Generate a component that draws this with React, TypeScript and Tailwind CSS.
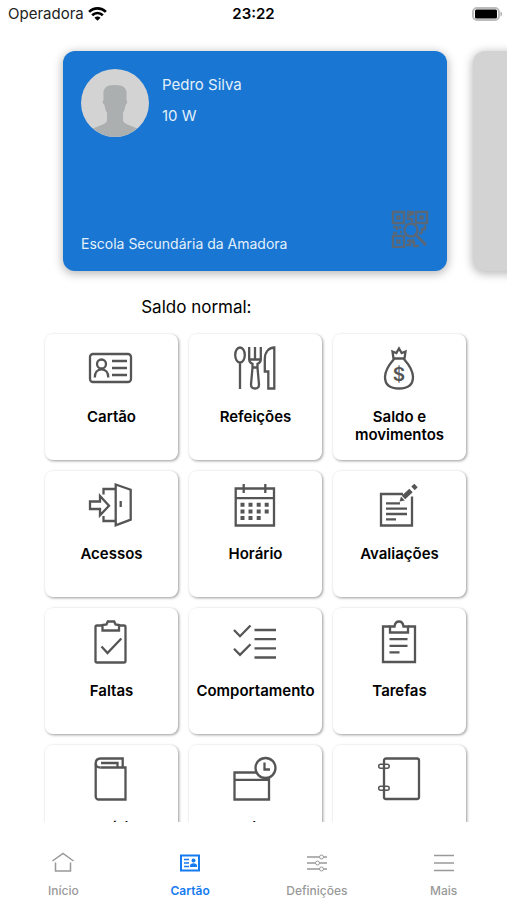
import type { ReactNode } from "react";

function TileIcon({ children }: { children: ReactNode }) {
  return (
    <svg
      viewBox="1 0 46 44"
      width="46"
      height="44"
      fill="none"
      stroke="currentColor"
      strokeWidth="2.3"
      aria-hidden="true"
      className="shrink-0 overflow-visible text-[#555555]"
    >
      {children}
    </svg>
  );
}

const tiles: { label: string; icon: ReactNode }[] = [
  {
    label: "Cartão",
    icon: (
      <>
        <rect x="2" y="8" width="41" height="28" rx="3" />
        <circle cx="13.500" cy="18" r="4.500" />
        <path d="M6.800 31.500c0-5 2.600-8.200 6.700-8.200s6.800 3.200 6.800 8.200M24 15h15M24 22h15M24 29h15" />
      </>
    ),
  },
  {
    label: "Refeições",
    icon: (
      <>
        <ellipse cx="8" cy="9" rx="4.800" ry="7.500" />
        <path d="M8 16.500V43" />
        <path d="M17.200 1v12.500c0 2.500 1 3.500 3.300 4.300v4L19 38.500c0 2.500 1.300 4 4 4s4-1.500 4-4l-1.500-16.700v-4c2.300-.8 3.300-1.800 3.300-4.300V1M23 1v13M17.500 13.500h11.300M20 21.500h6" />
        <path d="M42.300 1.500v41h-6V25.500h-3.500V13c0-7 4-11.500 9.500-11.500z" />
      </>
    ),
  },
  {
    label: "Saldo e movimentos",
    icon: (
      <>
        <path d="M17.500 12.500L16.500 5.500l3.800 1.500L23 2.500 25.700 7l3.800-1.500-1 7zM18 13C14.500 17 9 23 9 31c0 7.500 5 11.500 14 11.500S37 38.500 37 31c0-8-5.500-14-9-18" />
        <text
          x="23"
          y="35"
          textAnchor="middle"
          fontSize="19"
          fontWeight="600"
          fill="currentColor"
          stroke="none"
        >
          $
        </text>
      </>
    ),
  },
  {
    label: "Acessos",
    icon: (
      <>
        <path d="M2 18.500h10v-5.500l9 9.700-9 9.700V26H2z" />
        <path d="M15.500 11.500V6H27.500M15.500 33v5H27.500M27.700 1.500l15 5.200v30l-15 5.600zM32.700 18v6" />
      </>
    ),
  },
  {
    label: "Horário",
    icon: (
      <>
        <path d="M3.700 5.500H42v37H3.700zM3.700 15.200H42M11.700 1v9M33.300 1v9" />
        <path
          strokeWidth="4"
          d="M8.500 21.700h4M16.500 21.700h4M24.700 21.700h4M32.700 21.700h4M8.500 28.400h4M16.500 28.400h4M24.700 28.400h4M32.700 28.400h4M8.500 35h4M16.500 35h4M24.700 35h4"
        />
      </>
    ),
  },
  {
    label: "Avaliações",
    icon: (
      <>
        <path d="M27 11H5v31.500h31V13.500M10 20.300h14M10 25.600h21M10 31h21M10 36.300h10" />
        <path strokeWidth="5" d="M27.500 14.500l7.500-7M37 5.300l3-2.800" />
        <path fill="currentColor" stroke="none" d="M23.500 18.500l1.500-5 3.800 4z" />
      </>
    ),
  },
  {
    label: "Faltas",
    icon: (
      <>
        <path d="M14.500 5.500H9a1.500 1.500 0 0 0-1.500 1.500v34A1.500 1.500 0 0 0 9 42.500h27a1.500 1.500 0 0 0 1.500-1.500V7A1.500 1.500 0 0 0 36 5.500h-5.500" />
        <path d="M14.500 10.500V5l4-.5 1.300-3h6.400l1.300 3 3.500.5v5.500zM13.500 26.500l6 6.500L33.300 18.500" />
      </>
    ),
  },
  {
    label: "Comportamento",
    icon: (
      <path d="M2 10l6 6.200L18.500 5.500M2 28.700l6 6.200 10.500-10.700M22.500 10H44M22.500 19.200H44M22.500 28.400H44M22.500 37.500H44" />
    ),
  },
  {
    label: "Tarefas",
    icon: (
      <>
        <path d="M14 6.500H7v35.500h32V6.500h-7" />
        <path d="M14 12.500v-6h4.500C19 3 20.500 1.500 23 1.500S27 3 27.500 6.500H32v6zM13.500 19.200h18M13.500 25.800h18M13.500 32.400h10" />
      </>
    ),
  },
  {
    label: "Sumários",
    icon: (
      <>
        <path d="M34.700 10.500V1.500H12.500C9.500 1.500 7.700 3.500 7.700 6.500V39.500a3 3 0 0 0 3 3H37.500V10.500H12.500" />
        <path d="M12.500 10.500C9.500 10.500 7.700 9 7.700 6.500M29.500 10.500V6H13" />
      </>
    ),
  },
  {
    label: "Atendimento",
    icon: (
      <>
        <path d="M24.500 15.500H2.500v27h34.500V20.500M2.500 22.800h34.500" />
        <circle cx="33.500" cy="11" r="10" />
        <path d="M32.500 5.500v7H38" />
      </>
    ),
  },
  {
    label: "Agenda",
    icon: (
      <>
        <rect x="8" y="1.500" width="35" height="40.500" rx="2" />
        <g strokeWidth="1.500">
          <rect x="2.700" y="7.300" width="10.500" height="4" rx="2" />
          <rect x="2.700" y="29.300" width="10.500" height="4" rx="2" />
        </g>
      </>
    ),
  },
];

function StatusBar() {
  return (
    <header className="grid h-7 shrink-0 grid-cols-3 items-center px-2 text-[15px] text-[#222222]">
      <div className="flex items-center gap-1">
        <span>Operadora</span>
        <svg viewBox="0 0 20 15" width="19" height="14" fill="none" stroke="#000" strokeWidth="2.800" aria-hidden="true">
          <path d="M1 5.200c5-5 13-5 18 0M4.300 8.800c3.200-3.200 8.200-3.200 11.400 0" />
          <path d="M10 14.800l-3.300-3.300c1.900-1.700 4.700-1.700 6.600 0z" fill="#000" stroke="none" />
        </svg>
      </div>
      <time className="text-center font-semibold text-black">23:22</time>
      <svg viewBox="0 0 31 14" width="31" height="14" className="-mr-1 justify-self-end" aria-hidden="true">
        <rect x="1" y="1" width="26" height="12" rx="4" fill="#fff" stroke="#bcbcbc" strokeWidth="2" />
        <rect x="3" y="2.500" width="22" height="9" rx="1.500" fill="#000" />
        <path d="M28.500 4.500c2 .8 2 4.200 0 5z" fill="#aaa" />
      </svg>
    </header>
  );
}

function StudentCard() {
  return (
    <article className="flex h-[220px] w-96 shrink-0 flex-col justify-between rounded-xl bg-[#1976d2] px-[18px] pt-[18px] pb-[15px] text-[15px] leading-6 text-[#e3f0fb] shadow-[0_2px_10px_1px_rgba(0,0,0,0.28)]">
      <div className="flex gap-[13px]">
        <svg viewBox="0 0 68 68" width="68" height="68" className="rounded-full bg-[#d3d3d3]" aria-hidden="true">
          <path
            fill="#abafaf"
            d="M22.500 27c-1-8 3-11 11.500-11s12.500 3 11.500 11v4c1.300 1 .8 4-1 5-.5 4-1.500 6-2.500 8v7c0 4 7 5 14 8.500C50 65 42 68 34 68s-16-3-22-8.500C20 56 26 55 26 51v-7c-1-2-2-4-2.500-8-1.800-1-2.300-4-1-5z"
          />
        </svg>
        <div className="pt-1">
          <p>Pedro Silva</p>
          <p className="mt-[7px]">10 W</p>
        </div>
      </div>
      <div className="flex items-end justify-between">
        <p className="text-[14px]">Escola Secundária da Amadora</p>
        <button type="button" aria-label="Código QR" className="mb-2 text-[#596776]">
          <svg viewBox="0 0 38 38" width="38" height="38" fill="none" stroke="currentColor" strokeWidth="2.400" aria-hidden="true">
            <path d="M2 2h11v11H2zM25 2h11v11H25zM2 26h11v11H2z" />
            <path d="M6.500 6.500h2v2h-2zM29.500 6.500h2v2h-2zM6.500 30.500h2v2h-2z" />
            <circle cx="20" cy="20" r="6.500" />
            <path strokeWidth="3" d="M25 25l10 10" />
            <path d="M16 2h4v3h-3v4h4v3M22 1v4M2 17h4v3M9 16v3M2 23h4M9 22h2M31 23v-4h3v-4M28 23h3M16 31h3v-2M15 35h4v-3h4v4h5M22 31v-2" />
          </svg>
        </button>
      </div>
    </article>
  );
}

const tabs: { label: string; icon: ReactNode }[] = [
  {
    label: "Início",
    icon: <path d="M1.500 10L12 2.500 22.500 10M4.500 11.500v8.500h15v-8.500" />,
  },
  {
    label: "Cartão",
    icon: (
      <>
        <path strokeWidth="2" d="M3 4.500h18v15H3z" />
        <path d="M6 8.500h5M6 12h5M6 15.500h5" />
        <circle cx="15.500" cy="9.500" r="2" fill="currentColor" stroke="none" />
        <path d="M12 16v-1c0-1.800 1.400-2.700 3.500-2.700s3.500.9 3.500 2.700v1z" fill="currentColor" stroke="none" />
      </>
    ),
  },
  {
    label: "Definições",
    icon: (
      <>
        <path d="M2 6h12.500M18.500 6H22M2 12h8.500M14.500 12H22M2 18h12.500M18.500 18H22" />
        <g strokeWidth="1">
          <circle cx="16.500" cy="6" r="2" />
          <circle cx="12.500" cy="12" r="2" />
          <circle cx="16.500" cy="18" r="2" />
        </g>
      </>
    ),
  },
  {
    label: "Mais",
    icon: <path d="M2 4.500h20M2 12h20M2 19.500h20" />,
  },
];

export default function App() {
  return (
    <div className="flex h-screen flex-col overflow-hidden bg-white font-['Inter','Liberation_Sans',sans-serif] text-black">
      <StatusBar />
      <main className="flex min-h-0 flex-1 flex-col">
        <section aria-label="Cartões" className="flex shrink-0 gap-[26px] overflow-hidden pt-[23px] pb-5 pl-[63px]">
          <StudentCard />
          <div className="h-[220px] w-96 shrink-0 rounded-xl bg-[#d3d3d3] shadow-[0_2px_10px_1px_rgba(0,0,0,0.28)]" />
        </section>
        <div className="grid shrink-0 grid-cols-2 pb-1 text-[17px] leading-8">
          <p className="pr-0.5 text-right">Saldo normal:</p>
        </div>
        <section
          aria-label="Serviços"
          className="grid min-h-0 flex-1 auto-rows-[126px] grid-cols-3 gap-[11px] overflow-hidden pt-[7px] pr-[41px] pl-[45px]"
        >
          {tiles.map((tile) => (
            <button
              key={tile.label}
              type="button"
              className="flex flex-col items-center gap-[18px] rounded-lg bg-white px-1 pt-3 text-[15px] leading-[18px] font-semibold shadow-[1px_1px_3px_rgba(0,0,0,0.4)]"
            >
              <TileIcon>{tile.icon}</TileIcon>
              {tile.label}
            </button>
          ))}
        </section>
      </main>
      <nav aria-label="Principal" className="grid h-[78px] shrink-0 grid-cols-4">
        {tabs.map((tab) => {
          const active = tab.label === "Cartão";
          return (
            <a
              key={tab.label}
              href="#"
              aria-current={active ? "page" : undefined}
              className={
                "flex flex-col items-center gap-[7px] pt-[29px] text-[12px] leading-[18px] " +
                (active ? "font-semibold text-[#167bf0]" : "font-medium text-[#999999]")
              }
            >
              <svg viewBox="0 0 24 24" width="24" height="24" fill="none" stroke="currentColor" strokeWidth="1.500" aria-hidden="true">
                {tab.icon}
              </svg>
              {tab.label}
            </a>
          );
        })}
      </nav>
    </div>
  );
}
